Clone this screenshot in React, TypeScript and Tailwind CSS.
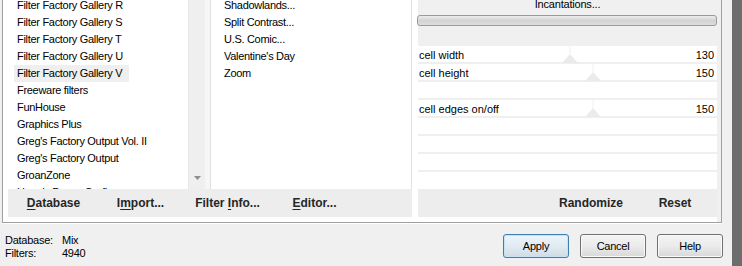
import React from "react";

const list1 = [
  "Filter Factory Gallery R",
  "Filter Factory Gallery S",
  "Filter Factory Gallery T",
  "Filter Factory Gallery U",
  "Filter Factory Gallery V",
  "Freeware filters",
  "FunHouse",
  "Graphics Plus",
  "Greg's Factory Output Vol. II",
  "Greg's Factory Output",
  "GroanZone",
  "Harry's Power Grafix",
];

const list2 = ["Shadowlands...", "Split Contrast...", "U.S. Comic...", "Valentine's Day", "Zoom"];

type Row = { label?: string; value?: string; thumb?: number };
const rows: Row[] = [
  { label: "cell width", value: "130", thumb: 143 },
  { label: "cell height", value: "150", thumb: 166 },
  {},
  { label: "cell edges on/off", value: "150", thumb: 166 },
  {},
  {},
  {},
];

function Thumb({ left }: { left: number }) {
  return (
    <svg
      className="absolute top-0"
      style={{ left }}
      width="18"
      height="18"
      viewBox="0 0 18 18"
    >
      <line x1="9" y1="0" x2="9" y2="8" stroke="#f1f1f1" strokeWidth="1" />
      <polygon points="9,8 1,17 17,17" fill="#ebebeb" />
    </svg>
  );
}

function BarBtn({ children, w }: { children: React.ReactNode; w: string }) {
  return (
    <div className={`${w} flex items-center justify-center text-[12px] font-bold text-[#262626]`}>
      <span className="whitespace-pre">{children}</span>
    </div>
  );
}

function U({ children }: { children: React.ReactNode }) {
  return <span className="underline decoration-1 underline-offset-[2px]">{children}</span>;
}

export default function App() {
  return (
    <div className="w-[742px] h-[266px] bg-[#f0f0f0] flex overflow-hidden font-['Liberation_Sans',Arial,sans-serif] text-black">
      <div className="w-[732px] flex flex-col">
        {/* group box */}
        <div className="ml-[2px] w-[720px] h-[223px] border-l border-r border-b border-[#a0a0a0] bg-white flex">
          {/* left section */}
          <div className="w-[409px] flex flex-col">
            <div className="h-[189px] flex overflow-hidden">
              <div className="w-[185px] overflow-hidden">
                <div className="-mt-[3px] pl-[11px] text-[11px] tracking-[-0.3px]">
                  {list1.map((t, i) => (
                    <div key={t} className="h-[17px] leading-[17px] whitespace-nowrap">
                      <span className={`inline-block h-[17px] pl-[3px] pr-[7px] ${i === 4 ? "bg-[#efefef]" : ""}`}>
                        {t}
                      </span>
                    </div>
                  ))}
                </div>
              </div>
              <div className="w-[17px] bg-[#efefef] border-l border-[#e6e6e6] flex flex-col justify-end items-center pb-[9px]">
                <svg width="7" height="4" viewBox="0 0 7 4">
                  <polygon points="0,0 7,0 3.5,4" fill="#8e8e8e" />
                </svg>
              </div>
              <div className="w-[5px] bg-[#f6f6f6]" />
              <div className="w-[202px] border-l border-r border-[#e2e2e2] overflow-hidden">
                <div className="-mt-[3px] pl-[13px] text-[11px] tracking-[-0.3px]">
                  {list2.map((t) => (
                    <div key={t} className="h-[17px] leading-[17px] whitespace-nowrap">
                      {t}
                    </div>
                  ))}
                </div>
              </div>
            </div>
            <div className="h-[28px] ml-[5px] bg-[#ededed] flex pl-[2px]">
              <BarBtn w="w-[87px]">
                <U>D</U>atabase
              </BarBtn>
              <BarBtn w="w-[87px]">
                I<U>m</U>port...
              </BarBtn>
              <BarBtn w="w-[87px]">
                {"Filter "}
                <U>I</U>nfo...
              </BarBtn>
              <BarBtn w="w-[87px]">
                <U>E</U>ditor...
              </BarBtn>
            </div>
            <div className="flex-1" />
          </div>
          {/* gap */}
          <div className="w-[6px]" />
          {/* right section */}
          <div className="w-[299px] flex flex-col">
            <div className="h-[46px] bg-[#f0f0f0] flex flex-col">
              <div className="-mt-[2px] h-[13px] leading-[13px] text-[11px] text-center tracking-[-0.2px]">
                Incantations...
              </div>
              <div className="mt-[4px] -ml-[1px] h-[11px] rounded-[3px] border border-[#9b9b9b] bg-gradient-to-b from-[#ececec] via-[#d3d3d3] to-[#dedede]" />
            </div>
            <div className="flex flex-col">
              {rows.map((r, i) => (
                <div key={i} className="relative h-[18px] border-b-2 border-[#efefef]">
                  {r.thumb !== undefined && <Thumb left={r.thumb} />}
                  {r.label && (
                    <div className="relative h-[16px] pt-[1px] leading-[16px] text-[11px] flex justify-between pl-[1px] pr-[3px]">
                      <span>{r.label}</span>
                      <span>{r.value}</span>
                    </div>
                  )}
                </div>
              ))}
            </div>
            <div className="flex-1" />
            <div className="h-[28px] bg-[#ededed] flex justify-end">
              <BarBtn w="w-[84px]">Randomize</BarBtn>
              <BarBtn w="w-[84px]">Reset</BarBtn>
            </div>
            <div className="h-[5px]" />
          </div>
          <div className="w-[4px] bg-[#f0f0f0]" />
        </div>
        <div className="ml-[2px] w-[720px] h-px bg-white" />
        {/* status + buttons */}
        <div className="mt-[10px] flex justify-between items-start pr-[9px]">
          <div className="pl-[5px] text-[11px] tracking-[-0.25px] leading-[13px] grid grid-cols-[57px_auto]">
            <span>Database:</span>
            <span>Mix</span>
            <span>Filters:</span>
            <span>4940</span>
          </div>
          <div className="flex gap-[11px] text-[11px] tracking-[-0.25px]">
            <button className="w-[66px] h-[24px] rounded-[3px] border border-[#3c7fb1] bg-gradient-to-b from-[#eef5fa] via-[#e2ebf2] to-[#cfdbe5] shadow-[inset_0_0_0_1px_#c6e4f7] flex items-center justify-center">
              Apply
            </button>
            <button className="w-[66px] h-[24px] rounded-[3px] border border-[#707070] bg-gradient-to-b from-[#f4f4f4] via-[#ebebeb] to-[#d8d8d8] shadow-[inset_0_0_0_1px_#fbfbfb] flex items-center justify-center">
              Cancel
            </button>
            <button className="w-[66px] h-[24px] rounded-[3px] border border-[#707070] bg-gradient-to-b from-[#f4f4f4] via-[#ebebeb] to-[#d8d8d8] shadow-[inset_0_0_0_1px_#fbfbfb] flex items-center justify-center">
              Help
            </button>
          </div>
        </div>
      </div>
      <div className="w-[10px] bg-[#6d6d6d]" />
    </div>
  );
}
